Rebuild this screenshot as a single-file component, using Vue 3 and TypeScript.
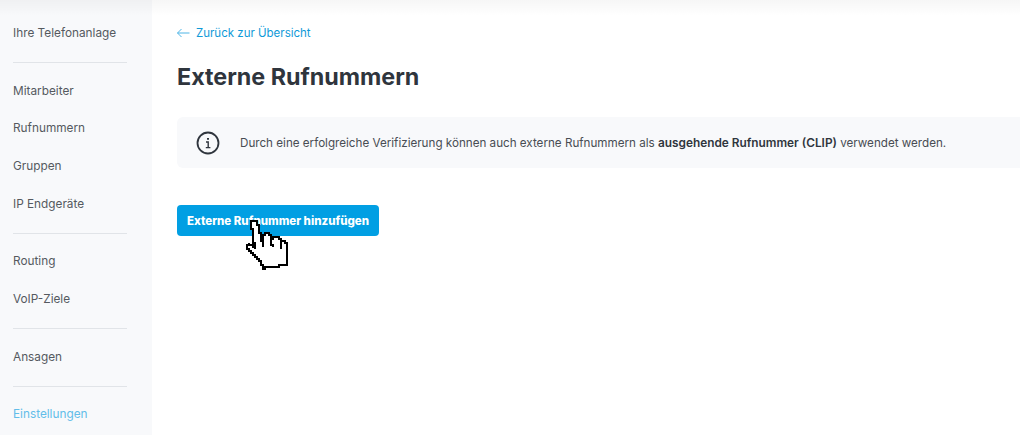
<script setup lang="ts">
const groups: string[][] = [
  ['Ihre Telefonanlage'],
  ['Mitarbeiter', 'Rufnummern', 'Gruppen', 'IP Endgeräte'],
  ['Routing', 'VoIP-Ziele'],
  ['Ansagen'],
  ['Einstellungen'],
]

type Pt = [number, number]

// Pixel-art outline: every slanted edge becomes a 2px staircase.
function staircase(points: Pt[], closed = true): string {
  const step = 2
  const snap = (v: number) => Math.round(v / step) * step
  const pts = closed ? [...points, points[0]] : points
  let d = `M${snap(pts[0][0])} ${snap(pts[0][1])}`
  for (let i = 1; i < pts.length; i++) {
    const [x0, y0] = pts[i - 1]
    const [x1, y1] = pts[i]
    const n = Math.max(1, Math.round(Math.max(Math.abs(x1 - x0), Math.abs(y1 - y0)) / step))
    for (let k = 1; k <= n; k++) {
      d += `H${snap(x0 + ((x1 - x0) * k) / n)}V${snap(y0 + ((y1 - y0) * k) / n)}`
    }
  }
  return closed ? d + 'Z' : d
}

const hand = staircase([
  [12, 2], [18, 2], [22, 20], [26, 14], [30, 14], [32, 20], [36, 17], [39, 17], [41, 22],
  [43, 21], [46, 21], [48, 30], [47, 46], [25, 49], [21, 42], [7, 28], [9, 24], [16, 29],
])
const creases = [
  staircase([[22, 20], [24, 28]], false),
  staircase([[32, 20], [33, 28]], false),
  staircase([[41, 22], [42, 29]], false),
].join('')
</script>

<template>
  <div class="page">
    <aside class="sidebar">
      <div v-for="(group, i) in groups" :key="i" class="group">
        <a
          v-for="item in group"
          :key="item"
          class="nav-item"
          :class="{ active: item === 'Einstellungen' }"
        >{{ item }}</a>
      </div>
    </aside>
    <main class="content">
      <a class="back">
        <svg class="back-icon" width="13" height="10" viewBox="0 0 13 10" fill="none">
          <path d="M12.500 5H.5M4.500 1 .5 5l4 4" stroke="#4fb5e6" stroke-width="1" />
        </svg>
        Zurück zur Übersicht
      </a>
      <h1 class="title">Externe Rufnummern</h1>
      <div class="notice">
        <svg class="info" width="24" height="24" viewBox="0 0 24 24" fill="none">
          <circle cx="12" cy="12" r="10.5" stroke="#2f353d" stroke-width="1.8" />
          <path d="M12 7v1.800" stroke="#2f353d" stroke-width="2" />
          <path d="M10 11h2.200v5.500M9.800 16.600h4.600" stroke="#2f353d" stroke-width="1.400" />
        </svg>
        <p class="notice-text">Durch eine erfolgreiche Verifizierung können auch externe Rufnummern als <b>ausgehende Rufnummer (CLIP)</b> verwendet werden.</p>
      </div>
      <div class="action">
        <button class="btn" type="button">Externe Rufnummer hinzufügen</button>
        <svg class="cursor" width="52" height="52" viewBox="0 0 52 52" shape-rendering="crispEdges">
          <path :d="hand" fill="#fff" stroke="#000" stroke-width="2" />
          <path :d="creases" fill="none" stroke="#000" stroke-width="2" />
        </svg>
      </div>
    </main>
    <div class="top-shade"></div>
  </div>
</template>

<style scoped>
.page {
  position: relative;
  display: flex;
  width: 1020px;
  height: 435px;
  overflow: hidden;
  background: #fff;
  font-family: Inter, "Liberation Sans", sans-serif;
}
.sidebar {
  flex: 0 0 152px;
  box-sizing: border-box;
  padding: 14px 0 0 13px;
  background: #f8f9fb;
}
.group {
  width: 114px;
  padding-bottom: 10.5px;
  margin-bottom: 8.5px;
  border-bottom: 1px solid #e1e4e8;
}
.group:last-child {
  border-bottom: 0;
}
.nav-item {
  display: block;
  height: 37.67px;
  line-height: 39px;
  font-size: 11.8px;
  color: #55595f;
  white-space: nowrap;
}
.nav-item.active {
  color: #62bde9;
}
.content {
  flex: 1;
  min-width: 0;
  padding: 25px 0 0 25px;
}
.back {
  display: flex;
  align-items: center;
  height: 15px;
  font-size: 11.5px;
  color: #0f9ad8;
}
.back-icon {
  margin-right: 6px;
}
.title {
  margin: 22px 0 0;
  font-size: 23.3px;
  line-height: 30px;
  font-weight: 700;
  color: #2f353d;
}
.notice {
  display: flex;
  align-items: center;
  height: 51px;
  margin-top: 25px;
  padding-left: 19px;
  border-radius: 6px 0 0 6px;
  background: #f8f9fb;
}
.info {
  flex: none;
}
.notice-text {
  margin: 0 0 0 20px;
  font-size: 11.65px;
  color: #484d54;
  white-space: nowrap;
}
.notice-text b {
  font-size: 11.83px;
  font-weight: 600;
  color: #2f353d;
}
.action {
  position: relative;
  margin-top: 37px;
}
.btn {
  display: block;
  width: 202px;
  height: 31px;
  padding: 0;
  border: 0;
  border-radius: 4px;
  background: #019fe3;
  color: #fff;
  font: 800 11.5px Inter, "Liberation Sans", sans-serif;
}
.cursor {
  position: absolute;
  left: 62px;
  top: 14px;
}
.top-shade {
  position: absolute;
  inset: 0 0 auto 0;
  height: 16px;
  background: linear-gradient(to bottom, rgba(0, 0, 0, 0.035), rgba(0, 0, 0, 0));
  pointer-events: none;
}
</style>
